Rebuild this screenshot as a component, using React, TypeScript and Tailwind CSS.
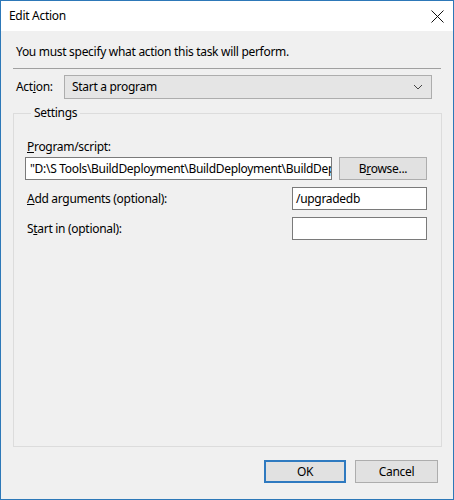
import React from "react";

const font = { fontFamily: '"Noto Sans", "Segoe UI", sans-serif' };

function U({ children }: { children: React.ReactNode }) {
  return <span className="underline underline-offset-[1px] decoration-1">{children}</span>;
}

export default function App() {
  return (
    <div
      className="w-[454px] h-[500px] flex flex-col border border-[#2d78b8] bg-[#f0f0f0] text-[12px] tracking-[-0.3px] text-black overflow-hidden"
      style={font}
    >
      {/* Title bar */}
      <div className="h-[30px] bg-white flex items-center justify-between pl-[8px] pr-[9px] shrink-0">
        <span className="text-[12px] leading-none">Edit Action</span>
        <svg width="13" height="13" viewBox="0 0 13 13" className="mt-[1px]">
          <path d="M0.5 0.5 L12.5 12.5 M12.5 0.5 L0.5 12.5" stroke="#111" strokeWidth="1" fill="none" />
        </svg>
      </div>

      {/* Body */}
      <div className="flex-1 flex flex-col px-[12px] pt-[13px] pb-[16px]">
        <div className="pl-[3px] leading-[16px]">You must specify what action this task will perform.</div>
        <div className="mt-[8px] h-px bg-[#a0a0a0]" />
        <div className="mt-[6px] flex items-center">
          <span className="w-[51px] pl-[3px] leading-[16px]">
            Act<U>i</U>on:
          </span>
          <div className="w-[368px] h-[24px] bg-[#e5e5e5] border border-[#adadad] flex items-center justify-between pl-[7px] pr-[8px]">
            <span className="leading-[16px]">Start a program</span>
            <svg width="10" height="6" viewBox="0 0 10 6">
              <path d="M1 1 L5 5 L9 1" stroke="#444" strokeWidth="1" fill="none" />
            </svg>
          </div>
        </div>

        <fieldset className="mt-[6px] h-[342px] border border-[#dcdcdc] pl-[11px] pr-[13px] w-[429px]">
          <legend className="ml-[6px] px-[3px] leading-[16px]">Settings</legend>
          <div className="mt-[18px] pl-[2px] leading-[16px]">
            <U>P</U>rogram/script:
          </div>
          <div className="mt-[2px] flex items-center">
            <div className="w-[307px] h-[23px] bg-white border border-[#7a7a7a] flex items-center pl-[4px] overflow-hidden whitespace-nowrap">
              <span className="leading-[16px]">"D:\S Tools\BuildDeployment\BuildDeployment\BuildDeployment.exe"</span>
            </div>
            <div className="ml-[7px] w-[88px] h-[23px] bg-[#e1e1e1] border border-[#adadad] flex items-center justify-center">
              <span className="leading-[16px]">
                B<U>r</U>owse...
              </span>
            </div>
          </div>
          <div className="mt-[7px] flex items-center justify-between pr-[1px]">
            <span className="pl-[2px] leading-[16px]">
              <U>A</U>dd arguments (optional):
            </span>
            <div className="w-[135px] h-[23px] bg-white border border-[#7a7a7a] flex items-center pl-[3px]">
              <span className="leading-[16px]">/upgradedb</span>
            </div>
          </div>
          <div className="mt-[7px] flex items-center justify-between pr-[1px]">
            <span className="pl-[2px] leading-[16px]">
              S<U>t</U>art in (optional):
            </span>
            <div className="w-[135px] h-[23px] bg-white border border-[#7a7a7a]" />
          </div>
        </fieldset>

        <div className="mt-auto flex justify-end gap-[9px] pr-[3px]">
          <div className="w-[82px] h-[23px] bg-[#e1e1e1] border-2 border-[#2f7ac0] flex items-center justify-center">
            <span className="leading-[16px]">OK</span>
          </div>
          <div className="w-[83px] h-[23px] bg-[#e1e1e1] border border-[#adadad] flex items-center justify-center">
            <span className="leading-[16px]">Cancel</span>
          </div>
        </div>
      </div>
    </div>
  );
}
